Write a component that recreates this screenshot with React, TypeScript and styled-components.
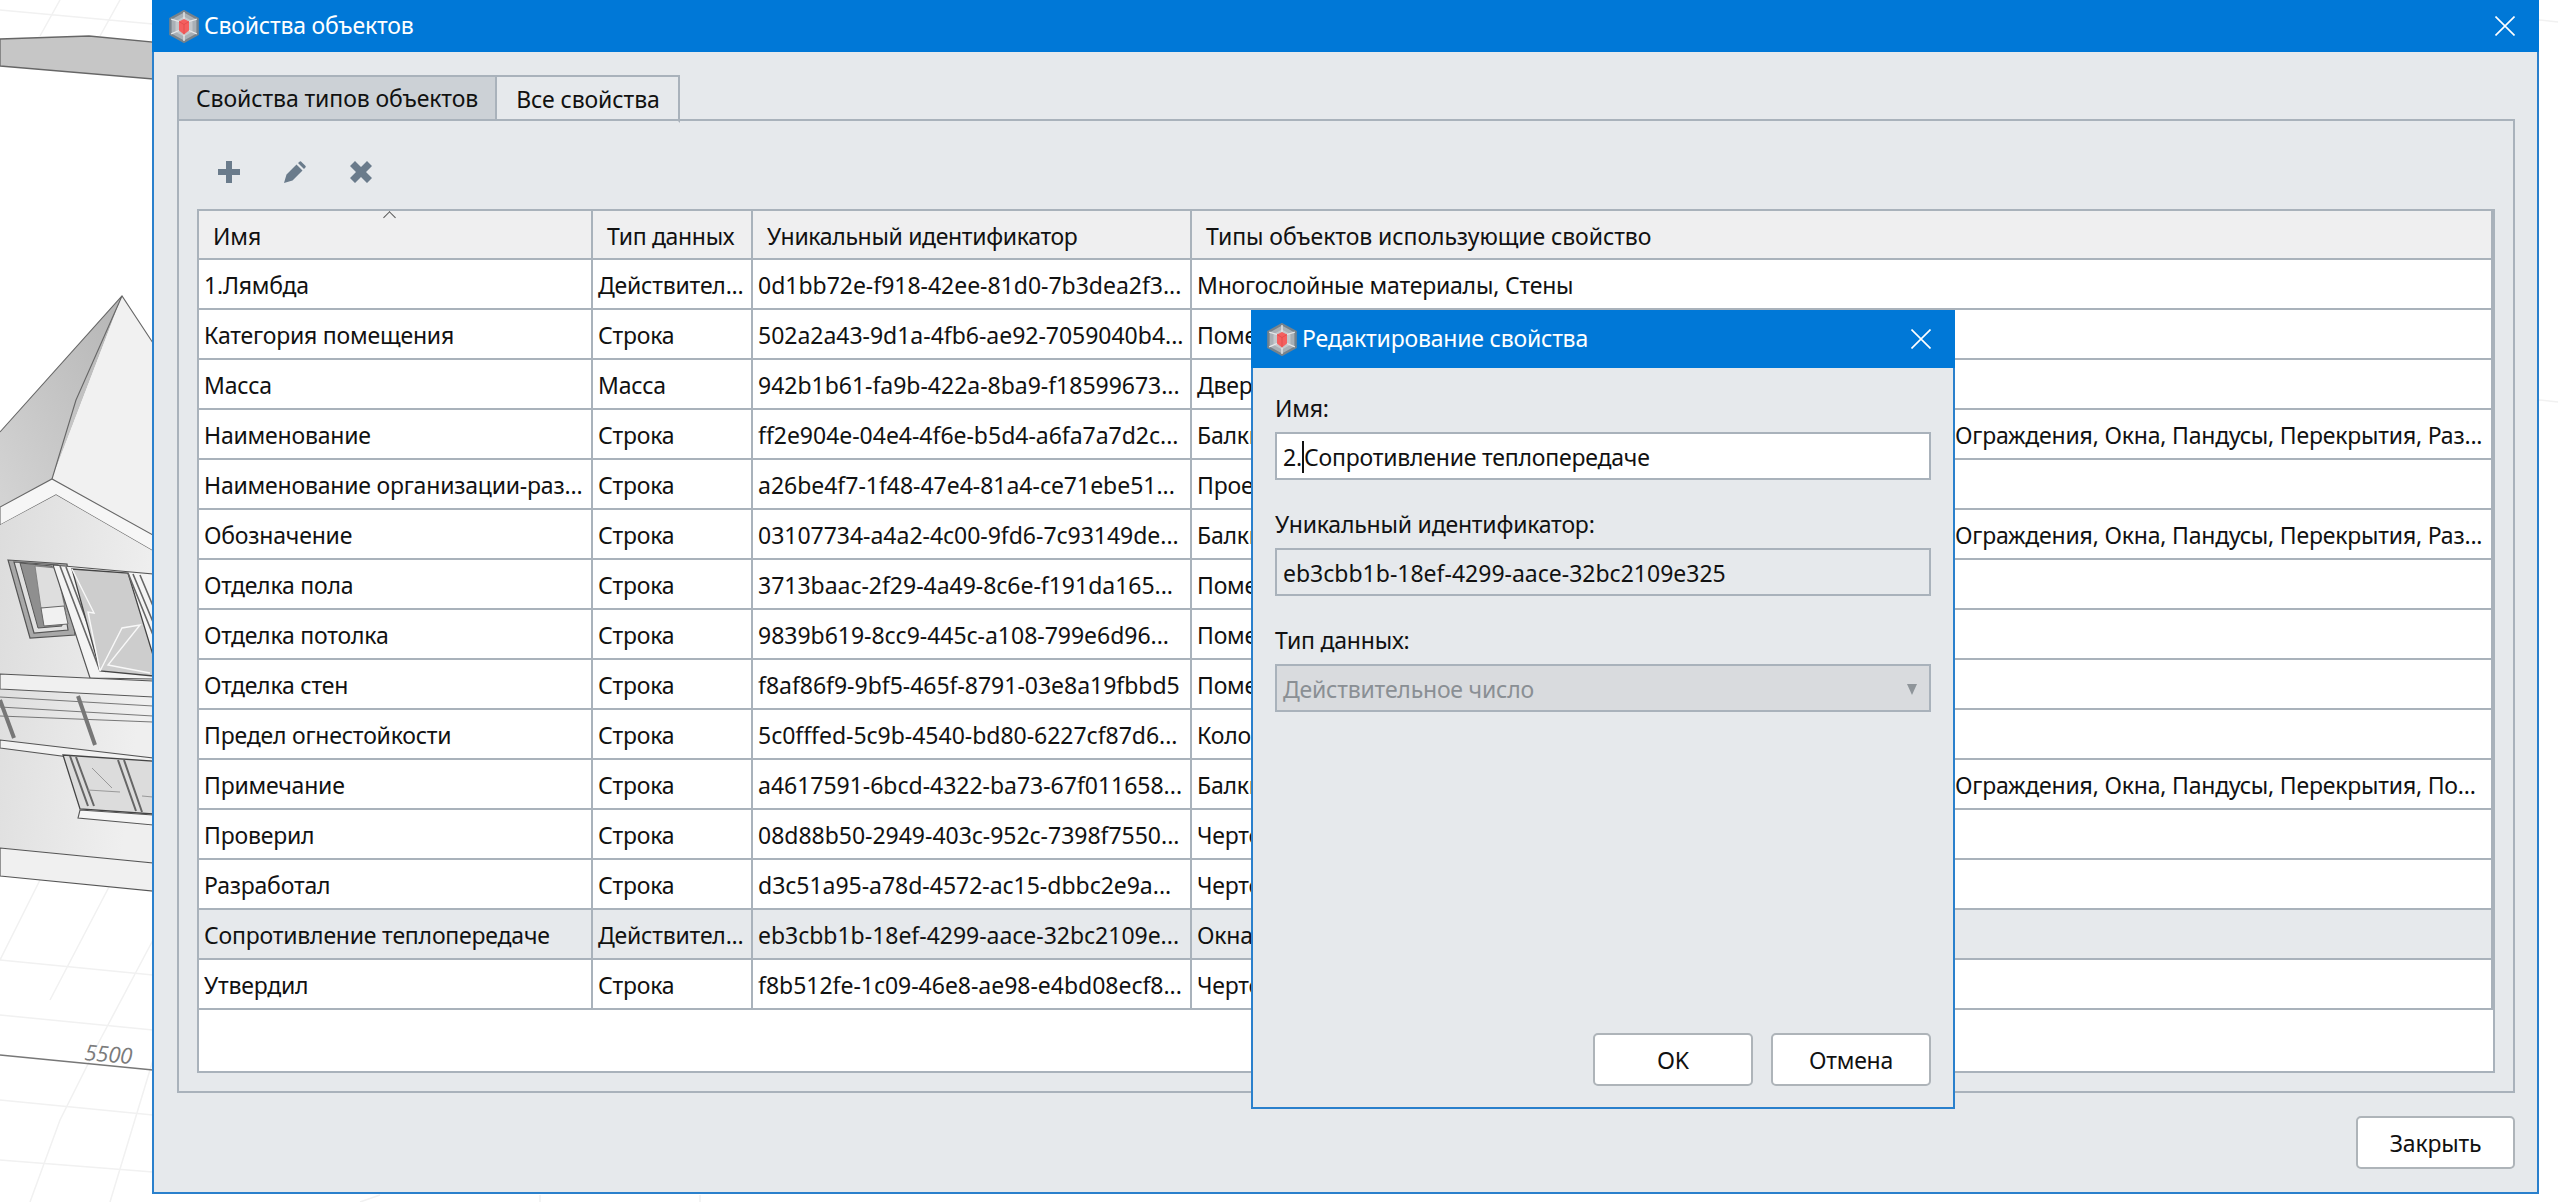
import styled, { createGlobalStyle } from 'styled-components';

const line = '#a9b2bb';
const blue = '#0078d7';
const edge = '#2a80cc';
const panel = '#e6e9ec';
const icon = '#6a7b8b';

const GlobalStyle = createGlobalStyle`
  html, body {
    margin: 0;
    padding: 0;
    background: #fff;
  }
  * {
    box-sizing: border-box;
  }
  body {
    font-family: "Noto Sans", "Open Sans", sans-serif;
    font-size: 23px;
    letter-spacing: -0.2px;
    color: #111;
  }
`;

type Row = {
  name: string;
  kind: string;
  id: string;
  types?: string;
  tail?: string;
  selected?: boolean;
};

const rows: Row[] = [
  { name: '1.Лямбда', kind: 'Действител...', id: '0d1bb72e-f918-42ee-81d0-7b3dea2f3...', types: 'Многослойные материалы, Стены' },
  { name: 'Категория помещения', kind: 'Строка', id: '502a2a43-9d1a-4fb6-ae92-7059040b4...', types: 'Помещения' },
  { name: 'Масса', kind: 'Масса', id: '942b1b61-fa9b-422a-8ba9-f18599673...', types: 'Двери' },
  { name: 'Наименование', kind: 'Строка', id: 'ff2e904e-04e4-4f6e-b5d4-a6fa7a7d2c...', types: 'Балки', tail: 'Ограждения, Окна, Пандусы, Перекрытия, Раз...' },
  { name: 'Наименование организации-раз...', kind: 'Строка', id: 'a26be4f7-1f48-47e4-81a4-ce71ebe51...', types: 'Проекты' },
  { name: 'Обозначение', kind: 'Строка', id: '03107734-a4a2-4c00-9fd6-7c93149de...', types: 'Балки', tail: 'Ограждения, Окна, Пандусы, Перекрытия, Раз...' },
  { name: 'Отделка пола', kind: 'Строка', id: '3713baac-2f29-4a49-8c6e-f191da165...', types: 'Помещения' },
  { name: 'Отделка потолка', kind: 'Строка', id: '9839b619-8cc9-445c-a108-799e6d96...', types: 'Помещения' },
  { name: 'Отделка стен', kind: 'Строка', id: 'f8af86f9-9bf5-465f-8791-03e8a19fbbd5', types: 'Помещения' },
  { name: 'Предел огнестойкости', kind: 'Строка', id: '5c0fffed-5c9b-4540-bd80-6227cf87d6...', types: 'Колонны' },
  { name: 'Примечание', kind: 'Строка', id: 'a4617591-6bcd-4322-ba73-67f011658...', types: 'Балки', tail: 'Ограждения, Окна, Пандусы, Перекрытия, По...' },
  { name: 'Проверил', kind: 'Строка', id: '08d88b50-2949-403c-952c-7398f7550...', types: 'Чертежи' },
  { name: 'Разработал', kind: 'Строка', id: 'd3c51a95-a78d-4572-ac15-dbbc2e9a...', types: 'Чертежи' },
  { name: 'Сопротивление теплопередаче', kind: 'Действител...', id: 'eb3cbb1b-18ef-4299-aace-32bc2109e...', types: 'Окна', selected: true },
  { name: 'Утвердил', kind: 'Строка', id: 'f8b512fe-1c09-46e8-ae98-e4bd08ecf8...', types: 'Чертежи' },
];

const AppLogo = () => (
  <svg width="30" height="33" viewBox="0 0 30 33">
    <path d="M15 1.2 L28.6 8.8 V24.2 L15 31.8 L1.4 24.2 V8.8 Z" fill="#a9b0b6" stroke="#76828b" strokeWidth="2.4" />
    <path d="M15 6.5 L23.5 11.2 V21.8 L15 26.5 L6.5 21.8 V11.2 Z" fill="#c3c8cc" />
    <path d="M10 11.5 L15 9 L20 11.5 V20.5 L15 24.5 L10 20.5 Z" fill="#f45f5f" />
    <path d="M10 11.5 L15 14.5 L20 11.5 M15 14.5 V24.5" stroke="#e04a4a" strokeWidth="0.8" fill="none" />
    <path d="M2.2 9.2 L10 11.5 M27.8 9.2 L20 11.5 M15 31 V24.5 M15 2 V9 M2.2 23.8 L10 20.5 M27.8 23.8 L20 20.5" stroke="#e6e8ea" strokeWidth="1.3" fill="none" />
  </svg>
);

const CloseGlyph = () => (
  <svg width="20" height="20" viewBox="0 0 20 20">
    <path d="M0.5 0.5 L19.5 19.5 M19.5 0.5 L0.5 19.5" stroke="#fff" strokeWidth="1.6" fill="none" />
  </svg>
);

const PlusGlyph = () => (
  <svg width="22" height="22" viewBox="0 0 22 22">
    <path d="M8 0 H14 V8 H22 V14 H14 V22 H8 V14 H0 V8 H8 Z" fill={icon} />
  </svg>
);

const PencilGlyph = () => (
  <svg width="22" height="22" viewBox="0 0 22 22">
    <path d="M0 22 L2.5 13.5 L12.5 3.5 L18.5 9.5 L8.5 19.5 Z M14 2 L15.8 0.4 Q16.4 0 17 0.4 L21.6 5 Q22 5.6 21.6 6.2 L20 8 Z" fill={icon} />
  </svg>
);

const CrossGlyph = () => (
  <svg width="22" height="22" viewBox="0 0 22 22">
    <path d="M5 0 L11 6 L17 0 L22 5 L16 11 L22 17 L17 22 L11 16 L5 22 L0 17 L6 11 L0 5 Z" fill={icon} />
  </svg>
);

const Scene = () => (
  <Canvas viewBox="0 0 2558 1202">
    <defs>
      <linearGradient id="wall" x1="0" y1="0" x2="1" y2="0.3">
        <stop offset="0" stopColor="#dcdcdc" />
        <stop offset="1" stopColor="#efefef" />
      </linearGradient>
      <linearGradient id="roof" x1="1" y1="0" x2="0" y2="1">
        <stop offset="0" stopColor="#b5b5b5" />
        <stop offset="1" stopColor="#d4d4d4" />
      </linearGradient>
    </defs>
    <rect width="2558" height="1202" fill="#fff" />
    <g stroke="#f1f1f1" strokeWidth="1.5" fill="none">
      <path d="M0 10 L153 24 M60 0 L40 36 M120 0 L100 36" />
      <path d="M0 960 L153 975 M0 1015 L153 1030 M0 1100 L153 1115 M0 1160 L153 1172" />
      <path d="M40 880 L0 960 M110 885 L50 1000 M153 940 L100 1040 L60 1120 L30 1202 M153 1060 L110 1202" />
      <path d="M380 1195 L360 1202 M540 1195 L540 1202 M700 1195 L700 1202 M2539 20 L2558 22 M2539 400 L2558 402" />
    </g>
    <path d="M0 39 L89 36 L153 42 V79 L0 66 Z" fill="#c6c6c6" stroke="#666" strokeWidth="1.3" />
    <path d="M0 507 L52 479 L122 296 L0 432 Z" fill="url(#roof)" />
    <path d="M52 479 L122 296 L153 343 V535 Z" fill="#f1f1f1" />
    <path d="M0 432 L122 296 L153 343 M76 400 L122 296 M76 400 L52 479" stroke="#666" strokeWidth="1.1" fill="none" />
    <path d="M0 507 L52 479 L153 535 V551 L56 495 L0 525 Z" fill="#f6f6f6" stroke="#666" strokeWidth="1.1" />
    <path d="M0 525 L56 495 L153 551 V863 L0 848 Z" fill="url(#wall)" />

    <path d="M8 560 L67 564 L75 635 L30 638 Z" fill="#a8a8a8" stroke="#555" strokeWidth="1.2" />
    <path d="M14 562 L58 565 L68 630 L34 633 Z" fill="#e0e0e0" stroke="#555" strokeWidth="1.2" />
    <path d="M20 563 L52 566 L62 626 L38 628 Z" fill="#8f8f8f" stroke="#555" strokeWidth="1" />
    <path d="M35 566 L56 568 L66 612 L41 608 Z" fill="#dedede" stroke="#777" strokeWidth="0.8" />
    <path d="M41 608 L64 606 L68 624 L44 626 Z" fill="#f1f1f1" stroke="#666" strokeWidth="1" />

    <path d="M53 565 L153 574 V679 L90 678 Z" fill="#f4f4f4" stroke="#555" strokeWidth="1.2" />
    <path d="M60 566 L100 671 M66 567 L106 672" stroke="#666" strokeWidth="1.6" fill="none" />
    <path d="M72 569 L128 573 L153 655 V676 L100 671 Z" fill="#cdcdcd" stroke="#444" strokeWidth="1.3" />
    <path d="M128 573 L153 635 M133 574 L153 622 M140 575 L153 606" stroke="#666" strokeWidth="1.6" fill="none" />
    <path d="M72 569 L94 613 L88 612 L100 671 M100 671 L122 628 L140 625 L108 665 L150 673" stroke="#f8f8f8" strokeWidth="1.4" fill="none" />

    <path d="M0 674 L153 681 V697 L0 689 Z" fill="#f0f0f0" stroke="#555" strokeWidth="1.1" />
    <path d="M0 697 L153 706 M0 707 L153 716 M0 716 L153 722" stroke="#777" strokeWidth="1.1" fill="none" />
    <path d="M0 700 L14 738 M78 696 L95 745" stroke="#777" strokeWidth="4" fill="none" />
    <path d="M0 740 L153 758 V768 L0 748 Z" fill="#f2f2f2" stroke="#555" strokeWidth="1.1" />

    <path d="M63 755 L153 761 V814 L80 809 Z" fill="#dcdcdc" stroke="#444" strokeWidth="1.3" />
    <path d="M70 756 L88 806 M76 757 L94 806 M118 760 L136 811 M124 760 L142 812" stroke="#666" strokeWidth="2" fill="none" />
    <path d="M88 790 L120 792 M142 796 L153 797 M92 768 L112 788" stroke="#999" strokeWidth="1" fill="none" />
    <path d="M80 810 L153 815 V825 L78 818 Z" fill="#f5f5f5" stroke="#555" strokeWidth="1.1" />
    <path d="M0 848 L153 863 V891 L0 876 Z" fill="#f0f0f0" stroke="#555" strokeWidth="1.2" />
    <path d="M0 1055 L153 1070" stroke="#777" strokeWidth="1.3" fill="none" />
    <SceneLabel x="84" y="1060" transform="rotate(5 84 1060)">5500</SceneLabel>
  </Canvas>
);

const App = () => (
  <Desktop>
    <GlobalStyle />
    <Scene />
    <MainWindow>
      <TitleBar $height={52} $inset={17}>
        <TitleLeft>
          <AppLogo />
          <TitleText>Свойства объектов</TitleText>
        </TitleLeft>
        <CloseGlyph />
      </TitleBar>
      <MainBody>
        <Tabs>
          <Tab>Свойства типов объектов</Tab>
          <Tab $active>Все свойства</Tab>
        </Tabs>
        <TabPanel>
          <Toolbar>
            <PlusGlyph />
            <PencilGlyph />
            <CrossGlyph />
          </Toolbar>
          <Table>
            <HeaderRow>
              <HeaderCell>
                Имя
                <SortMark />
              </HeaderCell>
              <HeaderCell $tight>Тип данных</HeaderCell>
              <HeaderCell $tight>Уникальный идентификатор</HeaderCell>
              <HeaderCell>Типы объектов использующие свойство</HeaderCell>
            </HeaderRow>
            {rows.map((row) => (
              <DataRow key={row.id} $selected={row.selected}>
                <Cell>{row.name}</Cell>
                <Cell>{row.kind}</Cell>
                <Cell $uuid>{row.id}</Cell>
                <Cell>
                  {row.tail ? <Covered>{row.types}</Covered> : row.types}
                  {row.tail}
                </Cell>
              </DataRow>
            ))}
          </Table>
        </TabPanel>
        <Footer>
          <Button $width={159}>Закрыть</Button>
        </Footer>
      </MainBody>
    </MainWindow>
    <Dialog>
      <TitleBar $height={58} $inset={16}>
        <TitleLeft>
          <AppLogo />
          <TitleText>Редактирование свойства</TitleText>
        </TitleLeft>
        <CloseGlyph />
      </TitleBar>
      <DialogBody>
        <Field>
          <FieldLabel>Имя:</FieldLabel>
          <Input>
            2.
            <Caret />
            Сопротивление теплопередаче
          </Input>
        </Field>
        <Field>
          <FieldLabel>Уникальный идентификатор:</FieldLabel>
          <Input $readOnly>eb3cbb1b-18ef-4299-aace-32bc2109e325</Input>
        </Field>
        <Field>
          <FieldLabel>Тип данных:</FieldLabel>
          <Select>
            Действительное число
            <SelectArrow />
          </Select>
        </Field>
        <DialogButtons>
          <Button $width={160}>OK</Button>
          <Button $width={160}>Отмена</Button>
        </DialogButtons>
      </DialogBody>
    </Dialog>
  </Desktop>
);

export default App;

const Desktop = styled.div`
  position: relative;
  width: 2558px;
  height: 1202px;
  overflow: hidden;
`;

const Canvas = styled.svg`
  position: absolute;
  inset: 0;
  width: 2558px;
  height: 1202px;
`;

const SceneLabel = styled.text`
  font-family: 'Open Sans', sans-serif;
  font-style: italic;
  font-size: 22px;
  fill: #7b7b7b;
`;

const MainWindow = styled.section`
  position: absolute;
  left: 152px;
  top: 0;
  width: 2387px;
  height: 1194px;
  display: flex;
  flex-direction: column;
  background: ${panel};
  border: 2px solid ${edge};
  border-top: none;
`;

const TitleBar = styled.header<{ $height: number; $inset: number }>`
  flex: none;
  display: flex;
  align-items: center;
  justify-content: space-between;
  height: ${(p) => p.$height}px;
  margin: 0 -2px;
  padding: 0 24px 0 ${(p) => p.$inset}px;
  background: ${blue};
  color: #fff;
`;

const TitleLeft = styled.div`
  display: flex;
  align-items: center;
  gap: 5px;
`;

const TitleText = styled.span`
  line-height: 32px;
  margin-top: -2px;
`;

const MainBody = styled.div`
  flex: 1;
  display: flex;
  flex-direction: column;
  min-height: 0;
  padding: 23px 22px 23px 23px;
`;

const Tabs = styled.div`
  flex: none;
  display: flex;
  height: 46px;
  letter-spacing: -0.1px;
`;

const Tab = styled.div<{ $active?: boolean }>`
  display: flex;
  align-items: center;
  padding: 0 ${(p) => (p.$active ? '18px 0 19px' : '17px')};
  background: ${(p) => (p.$active ? panel : '#ccd1d6')};
  border: 2px solid ${line};
  border-left-width: ${(p) => (p.$active ? 0 : 2)}px;
  border-bottom-color: ${(p) => (p.$active ? panel : line)};
  margin-bottom: ${(p) => (p.$active ? -2 : 0)}px;
  height: ${(p) => (p.$active ? 48 : 46)}px;
`;

const TabPanel = styled.div`
  flex: 1;
  display: flex;
  flex-direction: column;
  min-height: 0;
  padding: 0 18px 18px;
  border: 2px solid ${line};
  margin-top: -2px;
`;

const Toolbar = styled.div`
  flex: none;
  display: flex;
  align-items: center;
  gap: 44px;
  height: 88px;
  padding: 14px 0 0 21px;
`;

const Table = styled.div`
  flex: 1;
  display: flex;
  flex-direction: column;
  min-height: 0;
  background: #fff;
  border: 2px solid ${line};
`;

const columns = '394px 160px 439px 1fr';

const HeaderRow = styled.div`
  flex: none;
  display: grid;
  grid-template-columns: ${columns};
  height: 49px;
  background: #efeff0;
  border-bottom: 2px solid ${line};
  letter-spacing: -0.08px;
`;

const HeaderCell = styled.div<{ $tight?: boolean }>`
  position: relative;
  display: flex;
  align-items: center;
  padding: 2px 0 0 14px;
  border-right: 2px solid ${line};
  white-space: nowrap;
  overflow: hidden;
  letter-spacing: ${(p) => (p.$tight ? '-0.33px' : 'inherit')};
`;

const SortMark = styled.span`
  position: absolute;
  left: 186px;
  top: 2px;
  width: 9px;
  height: 9px;
  border-left: 1.5px solid #555;
  border-top: 1.5px solid #555;
  transform: rotate(45deg);
`;

const DataRow = styled.div<{ $selected?: boolean }>`
  flex: none;
  display: grid;
  grid-template-columns: ${columns};
  height: 50px;
  background: ${(p) => (p.$selected ? panel : '#fff')};
  border-bottom: 2px solid ${line};
`;

const Cell = styled.div<{ $uuid?: boolean }>`
  display: flex;
  align-items: center;
  padding: 2px 0 0 5px;
  border-right: 2px solid ${line};
  white-space: nowrap;
  overflow: hidden;
  letter-spacing: ${(p) => (p.$uuid ? '-0.02px' : 'inherit')};
`;

const Covered = styled.span`
  flex: none;
  width: 758px;
  overflow: hidden;
`;

const Footer = styled.div`
  flex: none;
  display: flex;
  justify-content: flex-end;
  padding-top: 23px;
`;

const Button = styled.button<{ $width: number }>`
  width: ${(p) => p.$width}px;
  height: 53px;
  padding: 0;
  background: #fff;
  border: 2px solid #aeb4b9;
  border-radius: 5px;
  font: inherit;
  letter-spacing: inherit;
  color: inherit;
`;

const Dialog = styled.section`
  position: absolute;
  left: 1251px;
  top: 310px;
  width: 704px;
  height: 799px;
  display: flex;
  flex-direction: column;
  background: ${panel};
  border: 2px solid ${edge};
  border-top: none;
`;

const DialogBody = styled.div`
  flex: 1;
  display: flex;
  flex-direction: column;
  gap: 28px;
  min-height: 0;
  padding: 24px 22px 21px;
`;

const Field = styled.div`
  display: flex;
  flex-direction: column;
  gap: 8px;
`;

const FieldLabel = styled.label`
  line-height: 32px;
`;

const Input = styled.div<{ $readOnly?: boolean }>`
  display: flex;
  align-items: center;
  height: 48px;
  padding: 2px 0 0 6px;
  background: ${(p) => (p.$readOnly ? panel : '#fff')};
  border: 2px solid ${line};
  letter-spacing: ${(p) => (p.$readOnly ? '0' : 'inherit')};
`;

const Caret = styled.span`
  flex: none;
  width: 0;
  height: 32px;
  border-left: 2px solid #111;
`;

const Select = styled.div`
  position: relative;
  display: flex;
  align-items: center;
  height: 48px;
  padding: 2px 0 0 6px;
  background: #d9dbde;
  border: 2px solid ${line};
  color: #8a8f94;
`;

const SelectArrow = styled.span`
  position: absolute;
  right: 12px;
  top: 18px;
  border-left: 5px solid transparent;
  border-right: 5px solid transparent;
  border-top: 11px solid #8f959a;
`;

const DialogButtons = styled.div`
  margin-top: auto;
  display: flex;
  justify-content: flex-end;
  gap: 18px;
`;
